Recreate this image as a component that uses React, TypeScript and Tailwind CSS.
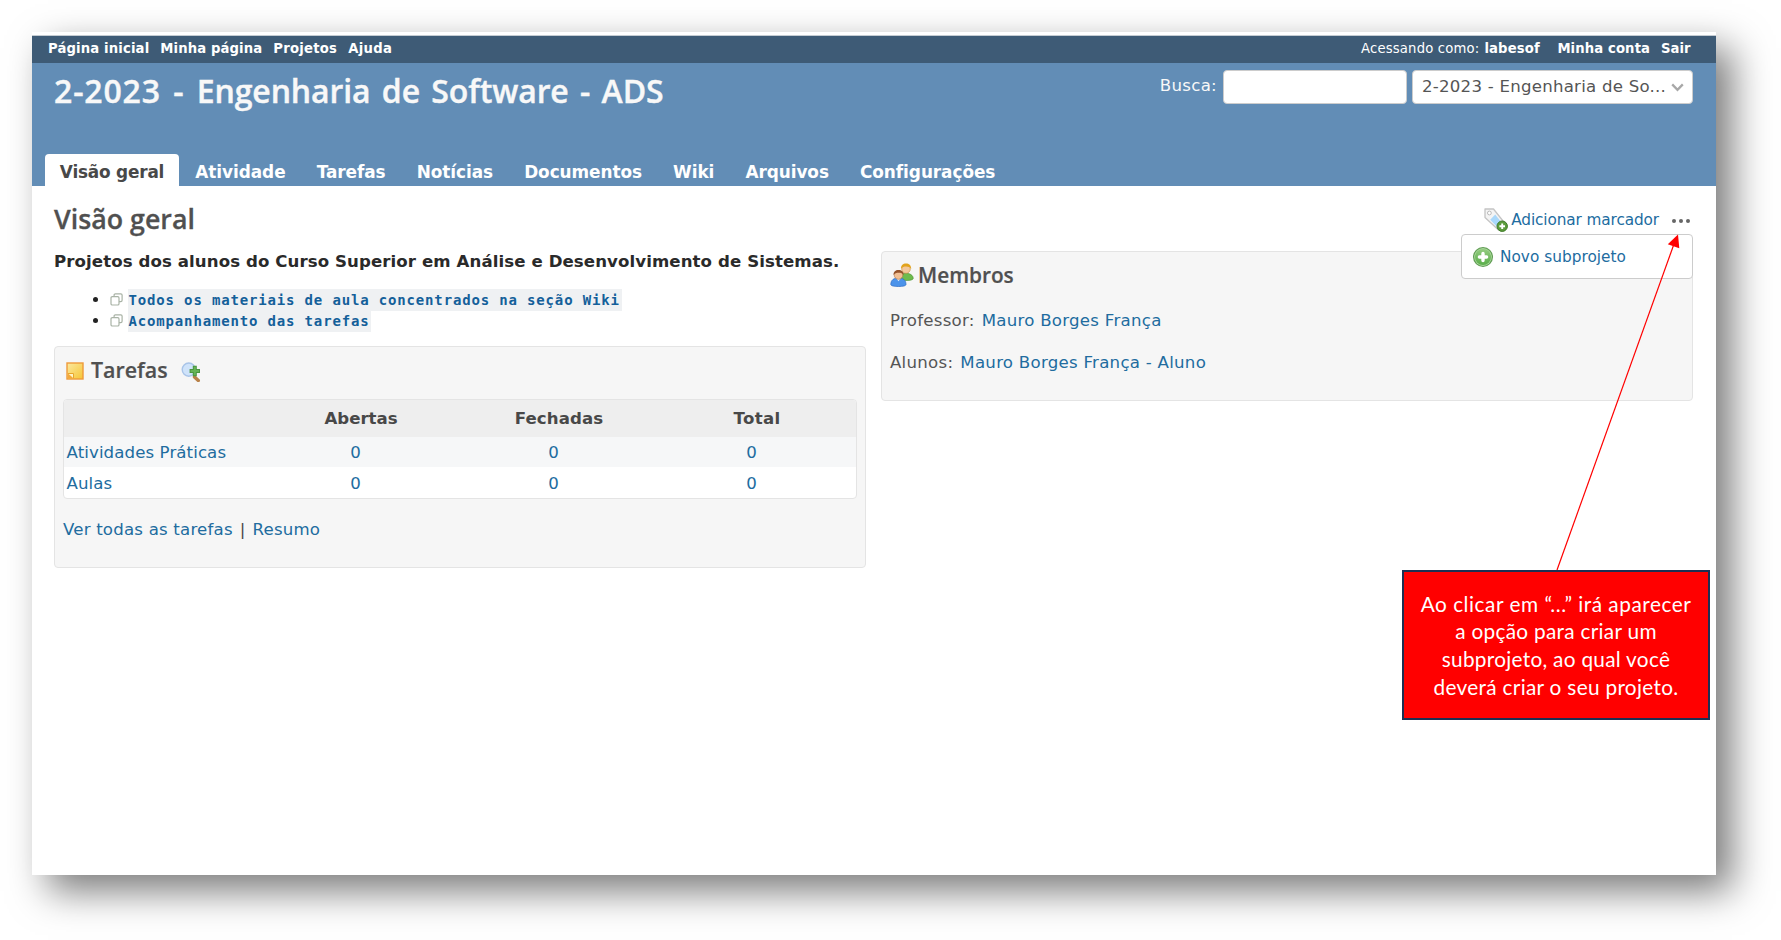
import type { ReactNode } from 'react';

function Link({ children, className = '' }: { children: ReactNode; className?: string }) {
  return (
    <a href="#" className={`text-[#216c9f] ${className}`}>
      {children}
    </a>
  );
}

function TagAddIcon() {
  return (
    <svg viewBox="0 0 24 24" className="h-6 w-6 shrink-0">
      <path d="M1 1h8.5L21 15.5 14.5 22 1 9.5z" fill="#f4f4f4" stroke="#c4c4c4" strokeWidth="1.3" strokeLinejoin="round" />
      <path d="M11.2 6.6l6 7.4-4.6 4.4-6.4-6.6z" fill="#a9d8fb" />
      <circle cx="5.4" cy="5" r="1.9" fill="#fff" stroke="#b9b9b9" />
      <circle cx="18.2" cy="18.2" r="5.2" fill="#5c9c3c" stroke="#3d7a26" strokeWidth="1" />
      <path d="M18.2 15.400v5.600M15.400 18.2h5.600" stroke="#fff" strokeWidth="1.9" />
    </svg>
  );
}

function AddIcon() {
  return (
    <svg viewBox="0 0 22 22" className="h-[22px] w-[22px] shrink-0">
      <defs>
        <linearGradient id="add" x1="0" y1="0" x2="0" y2="1">
          <stop offset="0" stopColor="#93cb80" />
          <stop offset="1" stopColor="#5aae4a" />
        </linearGradient>
      </defs>
      <circle cx="11" cy="11" r="10" fill="#5f9c52" />
      <circle cx="11" cy="11" r="8.9" fill="#a9d79b" />
      <circle cx="11" cy="11" r="8" fill="url(#add)" />
      <path d="M11 7.400v7.200M7.400 11h7.200" stroke="#fff" strokeWidth="3.400" strokeLinecap="round" />
    </svg>
  );
}

function UsersIcon() {
  return (
    <svg viewBox="0 0 24 24" className="h-6 w-6 shrink-0">
      <path d="M9.5 16.5c0-4.500 3-6.200 6.500-6.200s7.200 1.700 7.200 5.200c0 1.200-3 2-7 2z" fill="#6dbb4c" stroke="#4d9636" strokeWidth="0.7" />
      <circle cx="16" cy="6" r="4.300" fill="#f3c79b" stroke="#c98e3c" strokeWidth="0.6" />
      <path d="M11 5.800C11 2 13 .6 16 .6s5.200 1.600 5.200 5.400c-1.200-2-2.800-2.600-5-2.600S12.200 4 11 5.800z" fill="#e2a31c" />
      <path d="M.8 21.500c0-4.500 3-6.500 7.600-6.500s7.600 2 7.600 6.500c0 1.300-3 2-7.600 2s-7.600-.7-7.600-2z" fill="#4b93ea" stroke="#2d6cc4" strokeWidth="0.7" />
      <path d="M6.200 15.200l2.300 3 2.300-3z" fill="#e9f1fb" />
      <circle cx="8.500" cy="12" r="4.300" fill="#f1bf93" stroke="#b0703f" strokeWidth="0.6" />
      <path d="M3.500 12C3.500 8.500 5.500 7 8.500 7s5.200 1.500 5.200 5c-1.200-1.900-2.800-2.300-5-2.300s-4 .5-5.200 2.300z" fill="#95532b" />
    </svg>
  );
}

function NoteIcon() {
  return (
    <svg viewBox="0 0 18 18" className="h-[18px] w-[18px] shrink-0">
      <defs>
        <linearGradient id="note" x1="0" y1="0" x2="1" y2="1">
          <stop offset="0" stopColor="#fbe9a0" />
          <stop offset="1" stopColor="#f6c535" />
        </linearGradient>
      </defs>
      <rect x="1" y="1" width="16" height="16" fill="url(#note)" stroke="#ee9a3a" strokeWidth="1.400" />
      <path d="M2 11.500h5.500V16.500" fill="#fdf3c6" stroke="#e9a52c" />
      <path d="M2 11.500l5.500 5H2z" fill="#f3a93c" />
    </svg>
  );
}

function ZoomAddIcon() {
  return (
    <svg viewBox="0 0 20 20" className="h-5 w-5 shrink-0">
      <path d="M13.500 15l3.800 3.500" stroke="#b98249" strokeWidth="3.400" strokeLinecap="round" />
      <circle cx="7.800" cy="7.600" r="6.600" fill="#cfe3fa" stroke="#a9c4e8" strokeWidth="1.400" />
      <path d="M13.800 3.800v10.400M8.600 9h10.400" stroke="#4a9640" strokeWidth="4" />
      <path d="M13.800 4.800v8.400M9.600 9h8.400" stroke="#66b356" strokeWidth="2" />
    </svg>
  );
}

function ExternalIcon() {
  return (
    <svg viewBox="0 0 13 13" className="h-[13px] w-[13px] shrink-0" fill="#fff" stroke="#a9b3a6" strokeWidth="1.200">
      <rect x="4.100" y="0.800" width="8" height="7.800" rx="1.300" />
      <rect x="1" y="3.600" width="8" height="8.400" rx="1.300" />
    </svg>
  );
}

const tabs = ['Atividade', 'Tarefas', 'Notícias', 'Documentos', 'Wiki', 'Arquivos', 'Configurações'];

function WikiItem({ children, className = '' }: { children: ReactNode; className?: string }) {
  return (
    <li className="flex h-[21px] items-center">
      <span className="h-[5px] w-[5px] rounded-full bg-[#222]" />
      <span className="ml-[12px] mr-[5px]">
        <ExternalIcon />
      </span>
      <code
        className={`h-[22px] shrink-0 bg-[#eff1f3] pl-[0.500px] font-['DejaVu_Sans_Mono',monospace] text-[14px] leading-[23px] font-bold tracking-[0.840px] whitespace-nowrap text-[#14609a] ${className}`}
      >
        {children}
      </code>
    </li>
  );
}

function Row({ name, className }: { name: string; className: string }) {
  return (
    <div className={`grid grid-cols-[192.500px_198px_198px_198px] ${className}`}>
      <Link className="pl-[2.500px] tracking-[0.100px]">{name}</Link>
      {[0, 1, 2].map((i) => (
        <Link key={i} className="text-center">
          0
        </Link>
      ))}
    </div>
  );
}

export default function App() {
  return (
    <div className="h-[940px] w-[1781px] overflow-hidden bg-white pt-8 pl-8 font-['DejaVu_Sans',Verdana,sans-serif] text-[16.600px] text-[#484848]">
      <div className="relative flex h-[843px] w-[1684px] flex-col bg-white pt-[3px] shadow-[16px_16px_36px_rgba(0,0,0,0.520)]">
        <nav className="flex h-7 items-start justify-between border-t border-[#c5ccd2] bg-[#3e5b76] pr-[25.500px] pl-[16px] text-[13.200px] leading-[25px] font-bold text-white">
          <div className="flex gap-[11px]">
            <a href="#" className="tracking-[0.150px]">Página inicial</a>
            <a href="#" className="tracking-[0.120px]">Minha página</a>
            <a href="#" className="tracking-[0.250px]">Projetos</a>
            <a href="#" className="tracking-[0.300px]">Ajuda</a>
          </div>
          <div className="flex">
            <span className="font-normal tracking-[0.180px]">Acessando como:</span>
            <a href="#" className="ml-[5px] tracking-[0.150px]">labesof</a>
            <a href="#" className="ml-[17.500px] tracking-[0.120px]">Minha conta</a>
            <a href="#" className="ml-[11px]">Sair</a>
          </div>
        </nav>

        <header className="flex h-[123px] flex-col justify-between bg-[#628db6]">
          <div className="flex items-start justify-between pr-[23px] pl-[22px]">
            <h1 className="pt-[4px] font-['Open_Sans',sans-serif] text-[32px] leading-[48px] font-semibold tracking-[-0.120px] text-[#f8f8f8] [-webkit-text-stroke:0.400px_#f8f8f8] [word-spacing:3.200px]">
              <span className="tracking-[0.850px]">2-2023 - </span>Engenharia de Software - ADS
            </h1>
            <div className="flex items-center pt-[7px]">
              <label className="mr-[6px] -mt-[2px] tracking-[0.300px] text-[#f8f8f8]">Busca:</label>
              <div className="h-[34px] w-[184px] rounded-[4px] border border-[#ccc] bg-white" />
              <div className="ml-[5px] flex h-[34px] w-[281px] items-center justify-between rounded-[4px] border border-[#ccc] bg-white pr-[8px] pl-[9px] text-[#555]">
                <span className="tracking-[0.240px]">2-2023 - Engenharia de So...</span>
                <svg viewBox="0 0 13 9" className="h-[9px] w-[13px]" fill="none" stroke="#a8a8a8" strokeWidth="2.300">
                  <path d="M1.200 1.400l5.300 5.400 5.300-5.400" />
                </svg>
              </div>
            </div>
          </div>
          <div className="flex gap-[1.500px] pl-[13px] text-[16.900px] leading-[36px] font-bold text-white">
            <a href="#" className="h-8 w-[134px] rounded-t-[4px] bg-white text-center tracking-[-0.200px] text-[#484848]">
              Visão geral
            </a>
            {tabs.map((t) => (
              <a key={t} href="#" className="h-8 px-[14.800px] tracking-[-0.060px]">
                {t}
              </a>
            ))}
          </div>
        </header>

        <main className="flex flex-col px-[22px]">
          <div className="flex h-[57px] items-start justify-between">
            <h2 className="pt-[15px] font-['Open_Sans',sans-serif] text-[26.800px] leading-[36px] font-semibold text-[#505050] [-webkit-text-stroke:0.300px_#505050]">
              Visão geral
            </h2>
            <div className="flex items-center pt-[19px] pr-[4px]">
              <TagAddIcon />
              <Link className="mt-px ml-[3px] text-[15.300px] leading-[28px] tracking-[-0.110px]">Adicionar marcador</Link>
              <span className="mt-[3px] ml-[13px] flex gap-[3px]">
                <i className="h-1 w-1 rounded-full bg-[#666]" />
                <i className="h-1 w-1 rounded-full bg-[#666]" />
                <i className="h-1 w-1 rounded-full bg-[#666]" />
              </span>
            </div>
          </div>

          <div className="flex items-start justify-between pt-[7px] pr-[1px]">
            <section className="w-[812px]">
              <p className="h-[22px] leading-[24px] font-bold tracking-[0.090px] whitespace-nowrap text-[#2a2a2a]">
                Projetos dos alunos do Curso Superior em Análise e Desenvolvimento de Sistemas.
              </p>
              <ul className="mt-[17px] ml-[39px]">
                <WikiItem className="w-[494px]">Todos os materiais de aula concentrados na seção Wiki</WikiItem>
                <WikiItem className="w-[243px]">Acompanhamento das tarefas</WikiItem>
              </ul>

              <div className="mt-[15px] h-[222px] rounded-[4px] border border-[#e4e4e4] bg-[#f6f6f6] px-[8px]">
                <h3 className="flex items-center pt-[8px] pl-[3px] font-['Open_Sans',sans-serif] text-[21.400px] leading-[32px] font-semibold text-[#505050] [-webkit-text-stroke:0.200px_#505050]">
                  <NoteIcon />
                  <span className="ml-[7px] -mt-px">Tarefas</span>
                  <span className="mt-[3px] ml-[13px]">
                    <ZoomAddIcon />
                  </span>
                </h3>
                <div className="mt-[13px] h-[100px] w-[794px] overflow-hidden rounded-[4px] border border-[#e4e4e4] bg-white">
                  <div className="grid h-[37px] grid-cols-[198px_198px_198px_198px] bg-[#eee] text-center leading-[38px] font-bold">
                    <span />
                    <span>Abertas</span>
                    <span className="tracking-[0.100px]">Fechadas</span>
                    <span className="tracking-[0.300px]">Total</span>
                  </div>
                  <Row name="Atividades Práticas" className="h-[30px] bg-[#f6f7f8] leading-[31px]" />
                  <Row name="Aulas" className="h-[31px] leading-[33px]" />
                </div>
                <p className="mt-[18px] leading-[25px] tracking-[0.200px]">
                  <Link>Ver todas as tarefas</Link>
                  <span className="px-[7px]">|</span>
                  <Link>Resumo</Link>
                </p>
              </div>
            </section>

            <section className="mt-px h-[150px] w-[812px] rounded-[4px] border border-[#e4e4e4] bg-[#f6f6f6] px-[8px]">
              <h3 className="flex items-center pt-[7px] font-['Open_Sans',sans-serif] text-[20.800px] leading-[32px] font-semibold text-[#505050] [-webkit-text-stroke:0.200px_#505050]">
                <UsersIcon />
                <span className="ml-[4px]">Membros</span>
              </h3>
              <p className="mt-[17px] leading-[25px] tracking-[0.270px] text-[#555]">
                Professor: <Link className="ml-[1.500px]">Mauro Borges França</Link>
              </p>
              <p className="mt-[17px] leading-[25px] tracking-[0.270px] text-[#555]">
                Alunos: <Link className="ml-[1.500px]">Mauro Borges França - Aluno</Link>
              </p>
            </section>
          </div>
        </main>

        <div className="absolute top-[202px] left-[1429px] flex h-[45px] w-[232px] items-center rounded-[4px] border border-[#ccc] bg-white pl-[10px]">
          <AddIcon />
          <Link className="ml-[6px] mt-px text-[15.300px] tracking-[0.030px]">Novo subprojeto</Link>
        </div>

        <svg viewBox="0 0 130 340" className="absolute top-[200px] left-[1520px] h-[340px] w-[130px]">
          <path d="M5 338L122 12" stroke="#f00" strokeWidth="1.200" />
          <path d="M126 2.500L115.800 12.300 127.300 16.300z" fill="#f00" />
        </svg>
        <div className="absolute top-[538px] left-[1370px] flex h-[150px] w-[308px] flex-col items-center justify-center border-2 border-[#1c2f52] bg-[#f00] font-['Lato',Calibri,sans-serif] text-[20.800px] leading-[27.600px] whitespace-nowrap text-white">
          <span className="tracking-[0.530px]">Ao clicar em “...” irá aparecer</span>
          <span className="tracking-[0.290px]">a opção para criar um</span>
          <span className="tracking-[0.280px]">subprojeto, ao qual você</span>
          <span className="tracking-[0.300px]">deverá criar o seu projeto.</span>
        </div>
      </div>
    </div>
  );
}
